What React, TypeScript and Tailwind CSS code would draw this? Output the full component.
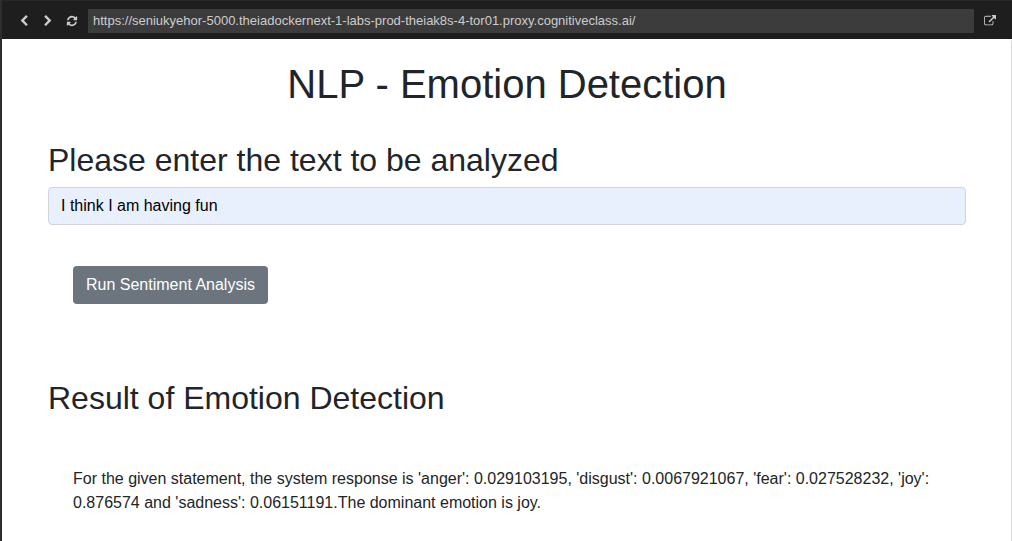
import { useState } from "react";

const icons = {
  back: "M1427 301l-531 531 531 531q19 19 19 45t-19 45l-166 166q-19 19-45 19t-45-19l-742-742q-19-19-19-45t19-45l742-742q19-19 45-19t45 19l166 166q19 19 19 45t-19 45z",
  forward: "M1363 877l-742 742q-19 19-45 19t-45-19l-166-166q-19-19-19-45t19-45l531-531-531-531q-19-19-19-45t19-45l166-166q19-19 45-19t45 19l742 742q19 19 19 45t-19 45z",
  reload: "M1639 1056q0 5-1 7-64 268-268 434.5t-478 166.5q-146 0-282.5-55t-243.5-157l-129 129q-19 19-45 19t-45-19-19-45v-448q0-26 19-45t45-19h448q26 0 45 19t19 45-19 45l-137 137q71 66 161 102t187 36q134 0 250-65t186-179q11-17 53-117 8-23 30-23h192q13 0 22.5 9.5t9.5 22.5zm25-800v448q0 26-19 45t-45 19h-448q-26 0-45-19t-19-45 19-45l138-138q-148-137-349-137-134 0-250 65t-186 179q-11 17-53 117-8 23-30 23h-199q-13 0-22.5-9.5t-9.5-22.5v-7q65-268 270-434.5t480-166.5q146 0 284 55.5t245 156.5l130-129q19-19 45-19t45 19 19 45z",
  external: "M1408 928v320q0 119-84.5 203.5t-203.5 84.5h-832q-119 0-203.5-84.5t-84.5-203.5v-832q0-119 84.5-203.5t203.5-84.5h704q14 0 23 9t9 23v64q0 14-9 23t-23 9h-704q-66 0-113 47t-47 113v832q0 66 47 113t113 47h832q66 0 113-47t47-113v-320q0-14 9-23t23-9h64q14 0 23 9t9 23zm384-864v512q0 26-19 45t-45 19-45-19l-176-176-652 652q-10 10-23 10t-23-10l-114-114q-10-10-10-23t10-23l652-652-176-176q-19-19-19-45t19-45 45-19h512q26 0 45 19t19 45z",
};

function Icon({ name }: { name: keyof typeof icons }) {
  return (
    <svg className="size-3" viewBox="0 0 1792 1792" fill="currentColor" aria-hidden="true">
      <path d={icons[name]} />
    </svg>
  );
}

export default function App() {
  const [text, setText] = useState("I think I am having fun");
  const [url, setUrl] = useState("https://seniukyehor-5000.theiadockernext-1-labs-prod-theiak8s-4-tor01.proxy.cognitiveclass.ai/");
  return (
    <div className="flex min-h-screen flex-col border-l-2 border-[#2d2d2f] bg-white font-['Liberation_Sans',Arial,sans-serif] text-[#212529]">
      <header className="flex h-[39px] items-center border-t border-[#282828] bg-[#1e1e1e] pt-0.5 text-[#cccccc]">
        <button type="button" aria-label="Back" className="ml-2 flex w-7 justify-center"><Icon name="back" /></button>
        <button type="button" aria-label="Forward" className="flex w-5 justify-center"><Icon name="forward" /></button>
        <button type="button" aria-label="Reload" className="mr-0.5 flex w-7 justify-center"><Icon name="reload" /></button>
        <input aria-label="Address" value={url} onChange={(e) => setUrl(e.target.value)} className="h-6 min-w-0 flex-1 rounded-[1px] bg-[#3c3c3c] px-[5px] pb-0.5 text-[13px]" />
        <button type="button" aria-label="Open in new tab" className="mr-1.5 flex w-8 justify-center"><Icon name="external" /></button>
      </header>
      <main className="flex-1 rounded-tr-sm border-r border-[#dddddd] pt-[21px] pr-[45px] pl-[46px]">
        <h1 className="text-center text-[40px] leading-[48px]">NLP - Emotion Detection</h1>
        <label htmlFor="text" className="mt-[33px] block text-[32px] leading-[38px]">Please enter the text to be analyzed</label>
        <input id="text" value={text} onChange={(e) => setText(e.target.value)} className="mt-2 block h-[38px] w-full rounded border border-[#ced4da] bg-[#e8f0fe] px-3 text-base text-black" />
        <button type="button" className="mt-[41px] ml-[25px] block h-[38px] rounded bg-[#6c757d] px-[13px] text-base text-white">Run Sentiment Analysis</button>
        <h2 className="mt-[75px] text-[32px] leading-[38px]">Result of Emotion Detection</h2>
        <p className="mt-[50px] px-[25px] text-base">For the given statement, the system response is 'anger': 0.029103195, 'disgust': 0.0067921067, 'fear': 0.027528232, 'joy': 0.876574 and 'sadness': 0.06151191.The dominant emotion is joy.</p>
      </main>
    </div>
  );
}
